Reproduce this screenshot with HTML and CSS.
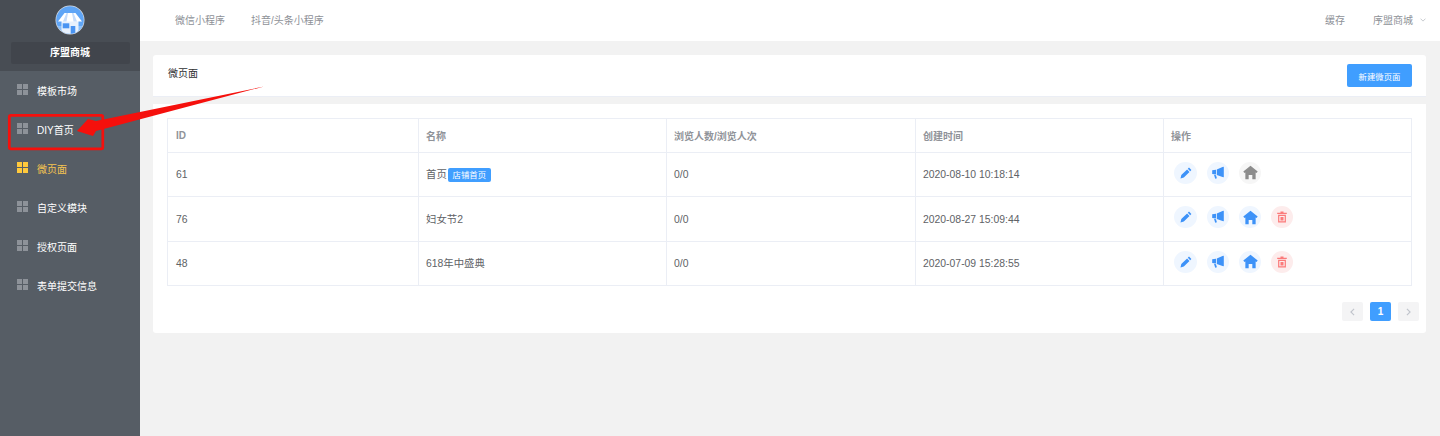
FILE: index.html
```html
<!DOCTYPE html>
<html lang="zh-CN">
<head>
<meta charset="utf-8">
<title>微页面</title>
<link rel="stylesheet" href="styles.css">
</head>
<body>
<svg width="0" height="0" class="defs">
  <symbol id="i-pencil" viewBox="0 0 12 12"><path d="M9 .6l2.400 2.400-1.200 1.200-2.400-2.400zM7.100 2.500l2.400 2.400-5.700 5.700-3.300.8.800-3.300z"/></symbol>
  <symbol id="i-horn" viewBox="0 0 14 14"><path d="M12.800 .8v10.400l-1.300-.1-5.700-2V3.500l5.700-2.500zM1.200 4.300l3.800-.6v4.900l-3.800-.6zM3 8.800l2 .4.900 3-1.700.6z"/></symbol>
  <symbol id="i-home" viewBox="0 0 14 14"><path d="M7 .6l6.700 5.500-1 1.400-.9-.6v6.300H8.700V9.300H5.300v3.900H2.200V6.900l-.9.6-1-1.400z"/></symbol>
  <symbol id="i-trash" viewBox="0 0 12 12"><path d="M4.500.5h3v1.200h3.300v1.200H1.200V1.700h3.300zM2.100 3.800h7.800v7.700H2.100zm1.200 1.200v5.300h5.400V5zM4.500 6h3v3.400h-3z" fill-rule="evenodd"/></symbol>
</svg>
<div class="app">
  <aside class="sidebar">
    <div class="brand">
      <svg class="logo" viewBox="0 0 30 30">
        <defs><clipPath id="lc"><circle cx="15" cy="15" r="13.800"/></clipPath></defs>
        <circle cx="15" cy="15" r="14.500" fill="#d5dae0"/>
        <g clip-path="url(#lc)">
          <rect width="30" height="30" fill="#5fa5f6"/>
          <rect y="21" width="30" height="9" fill="#8cc0fa"/>
          <rect x="6.500" y="15" width="17" height="15" fill="#e8f1fd"/>
          <path d="M9.500 8h11l6.500 8.500H3z" fill="#fff"/>
          <path d="M11.500 8h1.500l-1.500 8.500H8zM17 8h1.500l3.500 8.500h-3.500z" fill="#c5dcfb"/>
          <rect x="7.700" y="18.300" width="6.600" height="5" fill="#4a94f2"/>
          <rect x="15.700" y="21" width="4.600" height="8" fill="#4a94f2"/>
        </g>
      </svg>
      <div class="brand-name">序盟商城</div>
    </div>
    <nav class="nav">
      <a class="nav-item"><span class="grid-icon"><i></i><i></i><i></i><i></i></span>模板市场</a>
      <a class="nav-item"><span class="grid-icon"><i></i><i></i><i></i><i></i></span>DIY首页</a>
      <a class="nav-item active"><span class="grid-icon"><i></i><i></i><i></i><i></i></span>微页面</a>
      <a class="nav-item"><span class="grid-icon"><i></i><i></i><i></i><i></i></span>自定义模块</a>
      <a class="nav-item"><span class="grid-icon"><i></i><i></i><i></i><i></i></span>授权页面</a>
      <a class="nav-item"><span class="grid-icon"><i></i><i></i><i></i><i></i></span>表单提交信息</a>
    </nav>
  </aside>
  <main class="main">
    <header class="topbar">
      <div class="tabs"><span>微信小程序</span><span>抖音/头条小程序</span></div>
      <div class="top-right">
        <span>缓存</span>
        <span class="shop">序盟商城<svg class="chev" viewBox="0 0 8 5"><path d="M.7.700L4 4l3.300-3.300" fill="none" stroke="#b4b8bf" stroke-width="1"/></svg></span>
      </div>
    </header>
    <div class="content">
      <section class="title-card">
        <div class="title">微页面</div>
        <button class="btn">新建微页面</button>
      </section>
      <section class="table-card">
        <table class="table">
          <thead>
            <tr><th class="c1">ID</th><th class="c2">名称</th><th class="c3">浏览人数/浏览人次</th><th class="c4">创建时间</th><th class="c5">操作</th></tr>
          </thead>
          <tbody>
            <tr class="r1">
              <td class="id">61</td><td class="name">首页<span class="tag">店铺首页</span></td><td>0/0</td><td>2020-08-10 10:18:14</td>
              <td><div class="ops">
                <span class="op"><svg class="ic12"><use href="#i-pencil"/></svg></span>
                <span class="op"><svg class="ic14"><use href="#i-horn"/></svg></span>
                <span class="op gray"><svg class="ic15"><use href="#i-home"/></svg></span>
              </div></td>
            </tr>
            <tr class="r2">
              <td class="id">76</td><td class="name">妇女节2</td><td>0/0</td><td>2020-08-27 15:09:44</td>
              <td><div class="ops">
                <span class="op"><svg class="ic12"><use href="#i-pencil"/></svg></span>
                <span class="op"><svg class="ic14"><use href="#i-horn"/></svg></span>
                <span class="op"><svg class="ic15"><use href="#i-home"/></svg></span>
                <span class="op red"><svg class="ic12"><use href="#i-trash"/></svg></span>
              </div></td>
            </tr>
            <tr class="r3">
              <td class="id">48</td><td class="name">618年中盛典</td><td>0/0</td><td>2020-07-09 15:28:55</td>
              <td><div class="ops">
                <span class="op"><svg class="ic12"><use href="#i-pencil"/></svg></span>
                <span class="op"><svg class="ic14"><use href="#i-horn"/></svg></span>
                <span class="op"><svg class="ic15"><use href="#i-home"/></svg></span>
                <span class="op red"><svg class="ic12"><use href="#i-trash"/></svg></span>
              </div></td>
            </tr>
          </tbody>
        </table>
        <div class="pager">
          <span class="pg"><svg class="pg-ar" viewBox="0 0 6 10"><path d="M5 1L1 5l4 4" fill="none" stroke="#c0c4cc" stroke-width="1.400"/></svg></span>
          <span class="pg on">1</span>
          <span class="pg"><svg class="pg-ar" viewBox="0 0 6 10"><path d="M1 1l4 4-4 4" fill="none" stroke="#c0c4cc" stroke-width="1.400"/></svg></span>
        </div>
      </section>
    </div>
  </main>
</div>
<svg class="annotation" viewBox="0 0 1440 436">
  <rect x="9.300" y="115.300" width="93.500" height="33.500" rx="1.500" fill="none" stroke="#f5100c" stroke-width="2.700"/>
  <path d="M264 86.500L96 121l-8-2-11 12 16 5 3-5z" fill="#f5100c"/>
</svg>
</body>
</html>
```

FILE: styles.css
```css
* { box-sizing: border-box; }
html, body { margin: 0; height: 100%; }
body {
  position: relative;
  font-family: "Liberation Sans", "Noto Sans CJK SC", sans-serif;
  font-size: 10px;
  color: #606266;
  background: #f2f2f2;
  overflow: hidden;
}
.defs { position: absolute; }
.annotation { position: absolute; left: 0; top: 0; width: 1440px; height: 436px; pointer-events: none; }
.app { display: flex; height: 436px; }

.sidebar { width: 140px; flex: none; background: #565d65; }
.brand { height: 71px; background: #484d54; display: flex; flex-direction: column; align-items: center; padding-top: 5px; }
.logo { width: 30px; height: 30px; display: block; }
.brand-name {
  width: 119px; height: 22px; margin-top: 7px; background: #41454c; border-radius: 2px;
  color: #fff; font-weight: 700; text-align: center; line-height: 22px;
}
.nav-item { height: 39px; display: flex; align-items: center; padding-left: 17px; color: #fff; }
.grid-icon { width: 11px; height: 11px; margin-right: 9px; margin-top: -2px; display: grid; grid-template-columns: 1fr 1fr; gap: 1px; }
.grid-icon i { background: #8d9299; }
.active { color: #f5c451; }
.active .grid-icon i { background: #ffc93c; }

.main { flex: 1; min-width: 0; }
.topbar { height: 41px; background: #fff; display: flex; align-items: center; justify-content: space-between; padding: 0 14px 2px 35px; color: #8e9197; }
.tabs { display: flex; gap: 26px; }
.top-right { display: flex; gap: 28px; align-items: center; }
.shop { display: flex; align-items: center; gap: 7px; }
.chev { width: 6px; height: 4px; display: block; }
.content { padding: 14px 14px 0 13px; }
.title-card {
  height: 42px; background: #fff; border-bottom: 1px solid #ebeef5; border-radius: 3px 3px 0 0;
  display: flex; justify-content: space-between; align-items: center; padding: 0 14px;
}
.title { color: #303133; margin-top: -6px; margin-left: 1px; }
.btn {
  width: 65px; height: 23px; padding: 0; border: 0; border-radius: 2px; background: #409eff; color: #fff;
  font: 8.400px "Liberation Sans", "Noto Sans CJK SC", sans-serif;
}
.table-card { margin-top: 7px; height: 229px; background: #fff; border-radius: 0 0 3px 3px; padding: 14px; }
.table { width: 1244px; table-layout: fixed; border-collapse: collapse; }
.table th, .table td { border: 1px solid #ebeef5; text-align: left; padding: 0 0 0 7px; font-size: 10.400px; }
.table th { height: 34px; color: #909399; font-weight: 700; font-size: 10px; }
.table .c1, .table .id { padding-left: 8px; }
.table .name { padding-bottom: 2px; }
.c1 { width: 251px; } .c2 { width: 248px; } .c3 { width: 249px; } .c4 { width: 248px; } .c5 { width: 248px; }
.r1 td { height: 44px; } .r2 td { height: 45px; } .r3 td { height: 44px; }
.tag {
  display: inline-block; width: 43px; height: 14px; line-height: 14px; text-align: center; margin-left: 1px;
  background: #409eff; color: #fff; border-radius: 2px; font-size: 8.400px; vertical-align: 0;
}
.ops { display: flex; gap: 10px; padding-left: 3px; margin-bottom: 4px; }
.op { width: 22px; height: 22px; border-radius: 50%; background: #eff6ff; color: #3d92f8; display: flex; align-items: center; justify-content: center; }
.op:first-child { width: 23px; }
.op svg { fill: currentColor; display: block; }
.ic12 { width: 12px; height: 12px; }
.ic14 { width: 14px; height: 14px; }
.ic15 { width: 15px; height: 15px; }
.gray { background: #f6f6f6; color: #8c8c8c; }
.red { background: #fdecec; color: #fb7a7a; }
.pager { display: flex; justify-content: flex-end; gap: 7px; margin: 16px -7px 0 0; }
.pg { width: 21px; height: 19px; background: #f4f4f5; border-radius: 2px; display: flex; align-items: center; justify-content: center; }
.pg.on { background: #409eff; color: #fff; font-weight: 700; }
.pg-ar { width: 5px; height: 8px; display: block; }
```
